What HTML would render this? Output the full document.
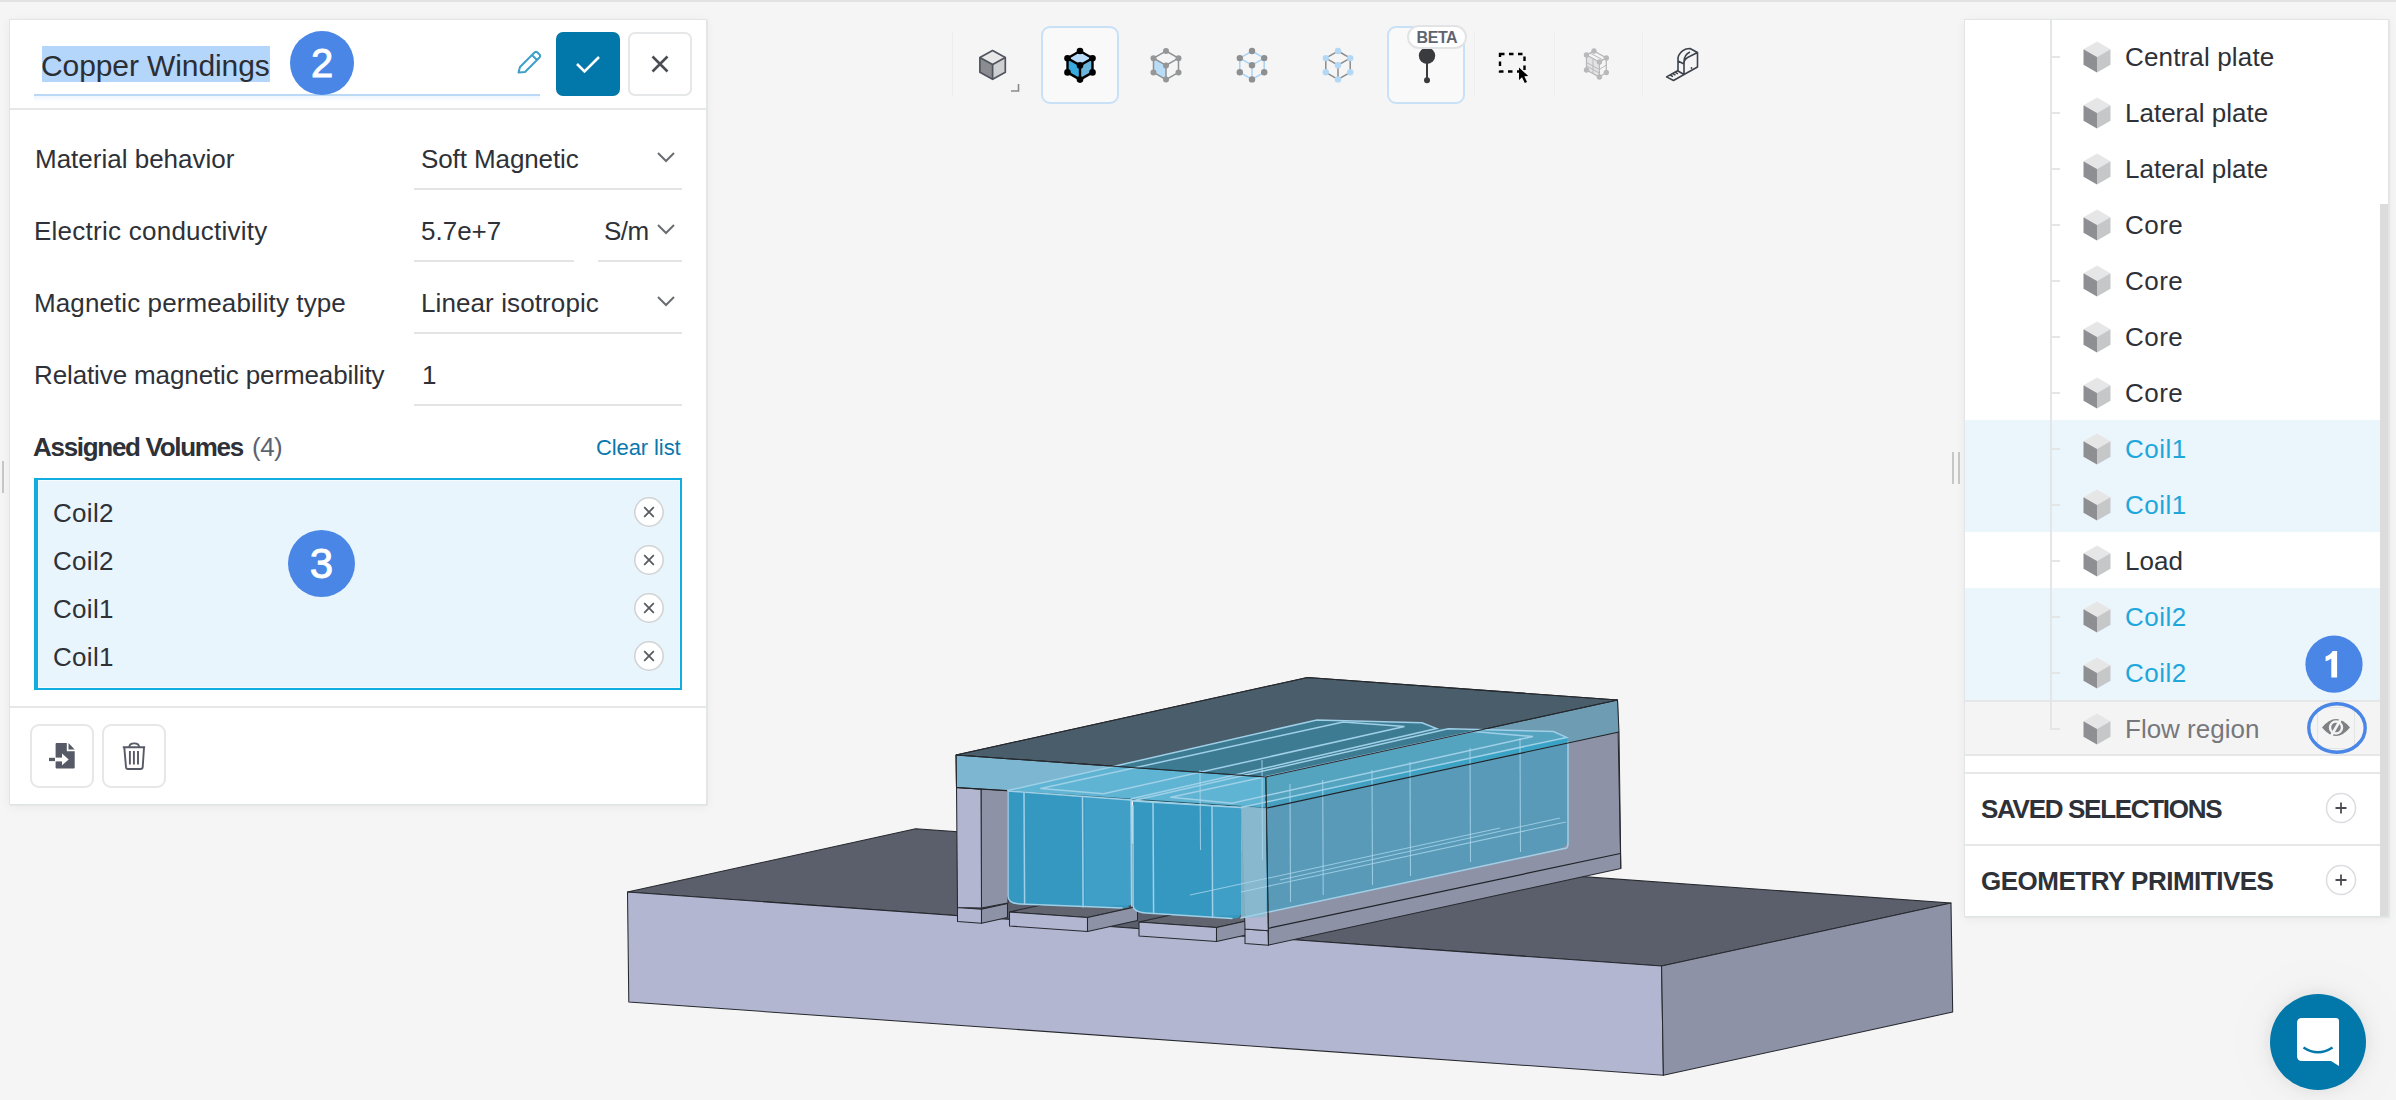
<!DOCTYPE html>
<html><head><meta charset="utf-8">
<style>
html,body{margin:0;padding:0}
body{width:2396px;height:1100px;overflow:hidden;background:#f5f5f5;position:relative;font-family:"Liberation Sans",sans-serif;color:#2e3137}
.a{position:absolute}
.t{position:absolute;line-height:26px;font-size:26px;white-space:nowrap}
.topline{left:0;top:0;width:2396px;height:2px;background:#e2e2e2}
#lp{left:9px;top:19px;width:696px;height:784px;background:#fff;border:1px solid #e2e5e5;box-shadow:1px 1px 0 #e4e7e7,0 2px 10px rgba(0,0,0,0.05)}
#rp{left:1964px;top:19px;width:423px;height:896px;background:#fff;border:1px solid #e2e5e5;box-shadow:1px 1px 0 #e4e7e7,0 2px 10px rgba(0,0,0,0.05)}
.hr{position:absolute;height:2px;background:#e6e8e8}
.ul{position:absolute;height:2px;background:#e3e4e6}
.badge{position:absolute;border-radius:50%;background:#4a86e6;color:#fff;font-weight:400;text-align:center;-webkit-text-stroke:0.9px #fff}
</style></head>
<body>
<div class="a topline"></div>

<!-- 3D model -->
<svg class="a" id="model" style="left:0;top:0" width="2396" height="1100" viewBox="0 0 2396 1100">
<polygon points="627.5,892.0 915.7,828.8 1951.0,903.0 1661.6,966.1" fill="#5b5e6b" stroke="#26292e" stroke-width="1.05" stroke-linejoin="round"/>
<polygon points="627.5,892.0 1661.6,966.1 1663.4,1075.2 628.8,1002.0" fill="#b3b6d1" stroke="#26292e" stroke-width="1.05" stroke-linejoin="round"/>
<polygon points="1661.6,966.1 1951.0,903.0 1952.7,1012.0 1663.4,1075.2" fill="#8e92a6" stroke="#26292e" stroke-width="1.05" stroke-linejoin="round"/>
<polygon points="1009.5,912.0 1087.5,917.5 1137.5,906.5 1059.5,901.0" fill="#62656f" stroke="#26292e" stroke-width="1.05" stroke-linejoin="round"/>
<polygon points="1009.5,912.0 1087.5,917.5 1087.5,931.5 1009.5,926.0" fill="#b3b6d1" stroke="#26292e" stroke-width="1.05" stroke-linejoin="round"/>
<polygon points="1087.5,917.5 1137.5,906.5 1137.5,920.5 1087.5,931.5" fill="#8e92a6" stroke="#26292e" stroke-width="1.05" stroke-linejoin="round"/>
<polygon points="1139.0,922.0 1216.5,927.5 1266.5,916.5 1189.0,911.0" fill="#62656f" stroke="#26292e" stroke-width="1.05" stroke-linejoin="round"/>
<polygon points="1139.0,922.0 1216.5,927.5 1216.5,941.5 1139.0,936.0" fill="#b3b6d1" stroke="#26292e" stroke-width="1.05" stroke-linejoin="round"/>
<polygon points="1216.5,927.5 1266.5,916.5 1266.5,930.5 1216.5,941.5" fill="#8e92a6" stroke="#26292e" stroke-width="1.05" stroke-linejoin="round"/>
<polygon points="957.5,907.5 981.5,909.2 1007.5,903.5 983.5,901.8" fill="#62656f" stroke="#26292e" stroke-width="1.05" stroke-linejoin="round"/>
<polygon points="957.5,907.5 981.5,909.2 981.5,923.2 957.5,921.5" fill="#b3b6d1" stroke="#26292e" stroke-width="1.05" stroke-linejoin="round"/>
<polygon points="981.5,909.2 1007.5,903.5 1007.5,917.5 981.5,923.2" fill="#8e92a6" stroke="#26292e" stroke-width="1.05" stroke-linejoin="round"/>
<polygon points="1245.0,929.0 1268.5,930.7 1268.5,930.7 1245.0,929.0" fill="#62656f" stroke="#26292e" stroke-width="1.05" stroke-linejoin="round"/>
<polygon points="1245.0,929.0 1268.5,930.7 1268.5,945.2 1245.0,943.5" fill="#b3b6d1" stroke="#26292e" stroke-width="1.05" stroke-linejoin="round"/>
<polygon points="1268.5,930.7 1268.5,930.7 1268.5,945.2 1268.5,945.2" fill="#8e92a6" stroke="#26292e" stroke-width="1.05" stroke-linejoin="round"/>
<polygon points="1265.5,777.0 1617.5,700.0 1620.8,868.5 1268.5,945.0" fill="#8e92a6" stroke="#26292e" stroke-width="1.05" stroke-linejoin="round"/>
<line x1="1267.5" y1="928.5" x2="1620.3" y2="853.5" stroke="#1f2226" stroke-width="1.2"/>
<polygon points="1265.5,777.0 1617.5,700.0 1619.0,732.0 1266.0,808.0" fill="#6e9cb2"/>
<polygon points="981.0,788.5 1008.0,790.5 1008.0,903.0 981.5,908.0" fill="#8e92a6" stroke="#26292e" stroke-width="1.05" stroke-linejoin="round"/>
<polygon points="956.5,787.5 981.0,789.2 981.5,908.0 957.5,907.5" fill="#b3b6d1" stroke="#26292e" stroke-width="1.05" stroke-linejoin="round"/>
<polygon points="1241.0,806.0 1266.0,808.0 1268.5,930.7 1245.0,929.0" fill="#b3b6d1" stroke="#26292e" stroke-width="1.05" stroke-linejoin="round"/>
<polygon points="956.0,755.0 1307.5,677.5 1617.5,700.0 1265.5,777.0" fill="#4a5d6b" stroke="#26292e" stroke-width="1.05" stroke-linejoin="round"/>
<polygon points="956.0,755.0 1265.5,777.0 1266.0,808.0 956.5,787.5" fill="#7db6d0" stroke="#26292e" stroke-width="1.05" stroke-linejoin="round"/>
<polygon points="1007.8,790.6 1316.9,719.9 1422.0,722.8 1436.6,728.6 1448.3,728.7 1553.5,731.6 1566.6,737.4 1568.0,742.0 1241.0,808.0 1131.0,800.0 1008.0,791.0" fill="rgb(40,175,215)" fill-opacity="0.37"/>
<polygon points="1241.0,808.0 1566.6,737.4 1568.0,742.0 1568.0,843.0 1562.0,848.0 1241.0,918.0" fill="rgb(20,165,205)" fill-opacity="0.44"/>
<polygon points="1241.0,806.0 1266.0,808.0 1266.0,917.0 1241.0,918.0" fill="rgb(140,186,206)" fill-opacity="0.85"/>
<path d="M1008 791 L1131 800 L1131 902 Q1131 908 1122 908 L1020 904 Q1008 903.5 1008 895 Z" fill="#3598c0"/>
<path d="M1133 801 L1241 807.5 L1241 913 Q1241 919 1232 918.5 L1146 913 Q1133 912 1133 905 Z" fill="#3598c0"/>
<path d="M1085 797.5 L1131 800 L1131 905 L1085 906 Z" fill="#49a6cc" fill-opacity="0.55"/>
<path d="M1213 806 L1241 807.5 L1241 915 L1213 916 Z" fill="#49a6cc" fill-opacity="0.55"/>
<polyline points="1007.8,790.6 1316.9,719.9 1422.0,722.8 1436.6,728.6 1131.4,798.8" stroke="#9fd0e8" stroke-width="1.5" fill="none" stroke-linecap="round"/>
<polyline points="1040.8,788.5 1343.2,721.9 1404.5,726.6 1103.6,793.8 1040.8,788.5" stroke="#9fd0e8" stroke-width="1.5" fill="none" stroke-linecap="round"/>
<polyline points="1132.8,800.8 1448.3,728.7 1553.5,731.6 1566.6,737.4 1240.9,807.5" stroke="#9fd0e8" stroke-width="1.5" fill="none" stroke-linecap="round"/>
<polyline points="1170.8,797.3 1473.2,731.6 1533.0,736.5 1232.0,803.2 1170.8,797.3" stroke="#9fd0e8" stroke-width="1.5" fill="none" stroke-linecap="round"/>
<path d="M1008 791 L1131 800 M1133 801 L1241 807.5" stroke="#9fd0e8" stroke-width="1.5" fill="none" stroke-linecap="round"/>
<path d="M1008 792 L1008 896 Q1008 903.5 1020 904 L1122 908 M1133 806 L1133 905 Q1133 912 1146 913 L1232 918.5 M1241 918 L1566.6 848 Q1568 847 1568 843 L1568 742" stroke="#9fd0e8" stroke-width="1.5" fill="none" stroke-linecap="round"/>
<line x1="1024" y1="793" x2="1024.6" y2="903.5" stroke="#9fd0e8" stroke-width="1.5" fill="none" stroke-linecap="round"/>
<line x1="1082.5" y1="797" x2="1083.1" y2="907" stroke="#9fd0e8" stroke-width="1.5" fill="none" stroke-linecap="round"/>
<line x1="1131" y1="800" x2="1131.6" y2="906" stroke="#9fd0e8" stroke-width="1.5" fill="none" stroke-linecap="round"/>
<line x1="1153" y1="802.5" x2="1153.6" y2="913.5" stroke="#9fd0e8" stroke-width="1.5" fill="none" stroke-linecap="round"/>
<line x1="1212" y1="806" x2="1212.6" y2="917.5" stroke="#9fd0e8" stroke-width="1.5" fill="none" stroke-linecap="round"/>
<line x1="1322.7" y1="780" x2="1323.2" y2="895" stroke="#a9d6ec" stroke-width="1.1" fill="none" stroke-opacity="0.8"/>
<line x1="1410" y1="762" x2="1410.5" y2="876" stroke="#a9d6ec" stroke-width="1.1" fill="none" stroke-opacity="0.8"/>
<line x1="1470" y1="748" x2="1470.5" y2="862" stroke="#a9d6ec" stroke-width="1.1" fill="none" stroke-opacity="0.8"/>
<line x1="1520" y1="738" x2="1520.5" y2="852" stroke="#a9d6ec" stroke-width="1.1" fill="none" stroke-opacity="0.8"/>
<line x1="1290" y1="784" x2="1290.5" y2="902" stroke="#a9d6ec" stroke-width="1.1" fill="none" stroke-opacity="0.8"/>
<line x1="1200" y1="770" x2="1200.5" y2="850" stroke="#a9d6ec" stroke-width="1.1" fill="none" stroke-opacity="0.8"/>
<line x1="1262" y1="760" x2="1262.5" y2="860" stroke="#a9d6ec" stroke-width="1.1" fill="none" stroke-opacity="0.8"/>
<line x1="1372" y1="770" x2="1372.5" y2="885" stroke="#a9d6ec" stroke-width="1.1" fill="none" stroke-opacity="0.8"/>
<path d="M1241 892 L1566 822 M1190 895 L1500 828 M1280 880 L1560 818" stroke="#a9d6ec" stroke-width="1.1" fill="none" stroke-opacity="0.8"/>
<polyline points="956.0,755.0 1307.5,677.5 1617.5,700.0 1619.0,732.0 1620.8,868.5" fill="none" stroke="#26292e" stroke-width="1.05" stroke-linejoin="round"/>
<polyline points="956.0,755.0 1265.5,777.0 1617.5,700.0" fill="none" stroke="#26292e" stroke-width="1.05" stroke-linejoin="round"/>
<line x1="956" y1="755" x2="956.5" y2="787.5" stroke="#26292e" stroke-width="1.05" stroke-linejoin="round"/>
<line x1="1266" y1="777" x2="1268.5" y2="945" stroke="#26292e" stroke-width="1.05" stroke-linejoin="round"/>
<line x1="1267" y1="808" x2="1619" y2="732" stroke="#1f2226" stroke-width="1.1"/>
<line x1="956.5" y1="787.5" x2="1007" y2="790.5" stroke="#1f2226" stroke-width="1.1"/>
</svg>

<!-- toolbar -->
<div class="a" style="left:952px;top:32px;width:1px;height:65px;background:#ededed"></div>
<div class="a" style="left:1474px;top:32px;width:1px;height:65px;background:#ededed"></div>
<div class="a" style="left:1554px;top:32px;width:1px;height:65px;background:#ededed"></div>
<div class="a" style="left:1642px;top:32px;width:1px;height:65px;background:#ededed"></div>
<div class="a" style="left:1041px;top:26px;width:74px;height:74px;border:2px solid #c9e1f7;border-radius:9px;background:#f9f9f9"></div>
<div class="a" style="left:1387px;top:26px;width:74px;height:74px;border:2px solid #c9e1f7;border-radius:9px;background:#f9f9f9"></div>
<svg class="a" style="left:0;top:0" width="1720" height="110" viewBox="0 0 1720 110"><polygon points="992.6,50.5 1005.3,57.5 992.6,64.5 979.9,57.5" fill="#e8e8e8"/><polygon points="979.9,57.5 992.6,64.5 992.6,79.3 979.9,72.3" fill="#8b8c91"/><polygon points="1005.3,57.5 992.6,64.5 992.6,79.3 1005.3,72.3" fill="#cfd0d2"/><polygon points="992.6,50.5 1005.3,57.5 1005.3,72.3 992.6,79.3 979.9,72.3 979.9,57.5" fill="none" stroke="#50545f" stroke-width="1.7" stroke-linejoin="round"/><polyline points="979.9,57.5 992.6,64.5 1005.3,57.5" fill="none" stroke="#50545f" stroke-width="1.7"/><line x1="992.6" y1="64.5" x2="992.6" y2="79.3" stroke="#50545f" stroke-width="1.7"/><polyline points="1011,91 1018.5,91 1018.5,84" fill="none" stroke="#8a8a8a" stroke-width="1.6"/><polygon points="1080.0,51.0 1092.5,58.2 1080.0,65.4 1067.5,58.2" fill="#b7dbf8"/><polygon points="1067.5,58.2 1080.0,65.4 1080.0,79.6 1067.5,72.4" fill="#37abdf"/><polygon points="1092.5,58.2 1080.0,65.4 1080.0,79.6 1092.5,72.4" fill="#6ab5dc"/><polygon points="1080.0,51.0 1092.5,58.2 1092.5,72.4 1080.0,79.6 1067.5,72.4 1067.5,58.2" fill="none" stroke="#000" stroke-width="2.4" stroke-linejoin="round"/><polyline points="1067.5,58.2 1080.0,65.4 1092.5,58.2" fill="none" stroke="#000" stroke-width="2.4"/><line x1="1080" y1="65.4" x2="1080" y2="79.60000000000001" stroke="#000" stroke-width="2.4"/><circle cx="1080" cy="51" r="3.3" fill="#000"/><circle cx="1067.5" cy="58.2" r="3.3" fill="#000"/><circle cx="1092.5" cy="58.2" r="3.3" fill="#000"/><circle cx="1080" cy="65.4" r="3.3" fill="#000"/><circle cx="1067.5" cy="72.4" r="3.3" fill="#000"/><circle cx="1092.5" cy="72.4" r="3.3" fill="#000"/><circle cx="1080" cy="79.60000000000001" r="3.3" fill="#000"/><polygon points="1153.5,58.2 1166.0,65.4 1166.0,79.6 1153.5,72.4" fill="#b9dcf7"/><polygon points="1166.0,51.0 1178.5,58.2 1178.5,72.4 1166.0,79.6 1153.5,72.4 1153.5,58.2" fill="none" stroke="#8f9092" stroke-width="1.5"/><polyline points="1153.5,58.2 1166.0,65.4 1178.5,58.2" fill="none" stroke="#8f9092" stroke-width="1.5"/><line x1="1166" y1="65.4" x2="1166" y2="79.60000000000001" stroke="#8f9092" stroke-width="1.5"/><circle cx="1166" cy="51" r="3" fill="#959698"/><circle cx="1153.5" cy="58.2" r="3" fill="#959698"/><circle cx="1178.5" cy="58.2" r="3" fill="#959698"/><circle cx="1166" cy="65.4" r="3" fill="#959698"/><circle cx="1153.5" cy="72.4" r="3" fill="#959698"/><circle cx="1178.5" cy="72.4" r="3" fill="#959698"/><circle cx="1166" cy="79.60000000000001" r="3" fill="#959698"/><polygon points="1252.0,51.0 1264.2,58.1 1264.2,72.3 1252.0,79.4 1239.8,72.3 1239.8,58.1" fill="none" stroke="#a9d2f5" stroke-width="1.5"/><polyline points="1239.8,58.1 1252.0,65.2 1264.2,58.1" fill="none" stroke="#a9d2f5" stroke-width="1.5"/><line x1="1252" y1="65.2" x2="1252" y2="79.4" stroke="#a9d2f5" stroke-width="1.5"/><circle cx="1252" cy="51" r="3.2" fill="#8e8f91"/><circle cx="1239.8" cy="58.1" r="3.2" fill="#8e8f91"/><circle cx="1264.2" cy="58.1" r="3.2" fill="#8e8f91"/><circle cx="1252" cy="65.2" r="3.2" fill="#8e8f91"/><circle cx="1239.8" cy="72.3" r="3.2" fill="#8e8f91"/><circle cx="1264.2" cy="72.3" r="3.2" fill="#8e8f91"/><circle cx="1252" cy="79.4" r="3.2" fill="#8e8f91"/><polygon points="1338.0,51.0 1350.2,58.1 1350.2,72.3 1338.0,79.4 1325.8,72.3 1325.8,58.1" fill="none" stroke="#8a8b8d" stroke-width="1.5"/><polyline points="1325.8,58.1 1338.0,65.2 1350.2,58.1" fill="none" stroke="#8a8b8d" stroke-width="1.5"/><line x1="1338" y1="65.2" x2="1338" y2="79.4" stroke="#8a8b8d" stroke-width="1.5"/><circle cx="1338" cy="51" r="3.2" fill="#b3d8f6"/><circle cx="1325.8" cy="58.1" r="3.2" fill="#b3d8f6"/><circle cx="1350.2" cy="58.1" r="3.2" fill="#b3d8f6"/><circle cx="1338" cy="65.2" r="3.2" fill="#b3d8f6"/><circle cx="1325.8" cy="72.3" r="3.2" fill="#b3d8f6"/><circle cx="1350.2" cy="72.3" r="3.2" fill="#b3d8f6"/><circle cx="1338" cy="79.4" r="3.2" fill="#b3d8f6"/><line x1="1427" y1="58" x2="1427" y2="80" stroke="#3a3b3f" stroke-width="2"/><circle cx="1427" cy="55.8" r="8.2" fill="#3a3b3f"/><circle cx="1427" cy="80.3" r="3" fill="#3a3b3f"/><rect x="1408" y="26" width="58" height="22" rx="11" fill="#fff" stroke="#e2e3e4" stroke-width="2"/><text x="1416.5" y="43" font-family="Liberation Sans" font-weight="700" font-size="16" fill="#5f6570" letter-spacing="-0.4">BETA</text><path d="M1500 54 L1524.5 54 L1524.5 71.5 L1500 71.5 Z" fill="none" stroke="#000" stroke-width="2.4" stroke-dasharray="4.5 4.5" stroke-dashoffset="0"/><path d="M1519 67.5 L1519 80 L1522 77.2 L1524.8 83 L1527 82 L1524.3 76.3 L1528.2 76 Z" fill="#000"/><polygon points="1586.5,55.0 1599.4,62.0 1599.4,77.0 1586.5,70.0" fill="#e3e3e5"/><polygon points="1594.0,51.0 1606.3,58.0 1606.3,72.5 1599.4,77.0 1586.5,70.0 1586.5,55.0" fill="none" stroke="#b9b9bb" stroke-width="1.3"/><polyline points="1586.5,55.0 1599.4,62.0 1606.3,58.0" fill="none" stroke="#b9b9bb" stroke-width="1.3"/><line x1="1599.4" y1="62" x2="1599.4" y2="77" stroke="#b9b9bb" stroke-width="1.3"/><path d="M1593 58.5 L1593 73.5 M1586.5 62.5 L1599.4 69.5 L1606.3 65 M1590 53 L1603 60 M1586.5 66 L1599.4 73" fill="none" stroke="#b9b9bb" stroke-width="1"/><circle cx="1594" cy="51" r="2.7" fill="#b9b9bb"/><circle cx="1586.5" cy="55" r="2.7" fill="#b9b9bb"/><circle cx="1606.3" cy="58" r="2.7" fill="#b9b9bb"/><circle cx="1599.4" cy="62" r="2.7" fill="#b9b9bb"/><circle cx="1586.5" cy="70" r="2.7" fill="#b9b9bb"/><circle cx="1606.3" cy="72.5" r="2.7" fill="#b9b9bb"/><circle cx="1599.4" cy="77" r="2.7" fill="#b9b9bb"/><path d="M1678 67 L1678 58 Q1679 52 1686 49 L1690 48.5 L1697.5 52.5 L1697.5 67 L1684 74.5 L1684 61.5 Q1684 55 1690 52 M1678 61 L1684 64 M1697.5 52.5 L1690 56.3 Q1684 59 1684 63 M1684 74.5 L1678 71 L1678 67" fill="none" stroke="#3d424c" stroke-width="1.6" stroke-linejoin="round"/><path d="M1678 70.5 L1666.5 76.8 L1673.5 80.5 L1684 74.5 M1670 75 L1673 76.6 M1672.5 73.6 L1675.5 75.2 M1675 72.2 L1678 73.8" fill="none" stroke="#3d424c" stroke-width="1.5" stroke-linejoin="round"/><circle cx="1691.5" cy="68" r="0.9" fill="#3d424c"/></svg>
<!-- Left panel -->
<div class="a" id="lp"></div>
<div class="hr" style="left:10px;top:108px;width:696px"></div>
<div class="hr" style="left:10px;top:706px;width:696px"></div>

<!-- title -->
<div class="a" style="left:42px;top:46px;width:228px;height:36px;background:#b5d6fb"></div>
<div class="t" style="left:41px;top:51px;font-size:30px;line-height:30px;letter-spacing:-0.1px;color:#2b2e33">Copper Windings</div>
<div class="a" style="left:34px;top:94px;width:506px;height:2px;background:#b9d9f7"></div>
<div class="a" style="left:34px;top:96px;width:506px;height:6px;background:linear-gradient(#eef6fd,#fff)"></div>
<div class="badge" style="left:290px;top:31px;width:64px;height:64px;font-size:40px;line-height:64px">2</div>
<svg class="a" style="left:514px;top:50px" width="28" height="28" viewBox="0 0 28 28"><path d="M4.5 22.5 L6 17 L20.5 2.5 Q22 1.2 23.5 2.5 L25.5 4.5 Q26.8 6 25.5 7.5 L11 22 Z M18 5 L23 10" fill="none" stroke="#3f9fc8" stroke-width="2" stroke-linejoin="round"/></svg>
<div class="a" style="left:556px;top:32px;width:64px;height:64px;background:#0277a9;border-radius:7px"></div>
<svg class="a" style="left:556px;top:32px" width="64" height="64" viewBox="0 0 64 64"><path d="M21 32 L28.5 39.5 L43 25" fill="none" stroke="#fff" stroke-width="2.6"/></svg>
<div class="a" style="left:628px;top:32px;width:60px;height:60px;border:2px solid #e6e7e8;border-radius:7px;background:#fff"></div>
<svg class="a" style="left:628px;top:32px" width="64" height="64" viewBox="0 0 64 64"><path d="M24.5 24.5 L39.5 39.5 M39.5 24.5 L24.5 39.5" fill="none" stroke="#4a4d52" stroke-width="2.6"/></svg>

<!-- form rows -->
<div class="t" style="left:35px;top:146px">Material behavior</div>
<div class="t" style="left:34px;top:218px;letter-spacing:0.25px">Electric conductivity</div>
<div class="t" style="left:34px;top:290px;letter-spacing:0.1px">Magnetic permeability type</div>
<div class="t" style="left:34px;top:362px;letter-spacing:-0.12px">Relative magnetic permeability</div>

<div class="t" style="left:421px;top:146px;letter-spacing:-0.1px">Soft Magnetic</div>
<div class="t" style="left:421px;top:218px;letter-spacing:0px">5.7e+7</div>
<div class="t" style="left:604px;top:218px;letter-spacing:-0.5px">S/m</div>
<div class="t" style="left:421px;top:290px;letter-spacing:0.1px">Linear isotropic</div>
<div class="t" style="left:422px;top:362px">1</div>
<svg class="a" style="left:656px;top:150px" width="20" height="14" viewBox="0 0 20 14"><path d="M2 3 L10 11 L18 3" fill="none" stroke="#6a6d72" stroke-width="2"/></svg>
<svg class="a" style="left:656px;top:222px" width="20" height="14" viewBox="0 0 20 14"><path d="M2 3 L10 11 L18 3" fill="none" stroke="#6a6d72" stroke-width="2"/></svg>
<svg class="a" style="left:656px;top:294px" width="20" height="14" viewBox="0 0 20 14"><path d="M2 3 L10 11 L18 3" fill="none" stroke="#6a6d72" stroke-width="2"/></svg>
<div class="ul" style="left:414px;top:188px;width:268px"></div>
<div class="ul" style="left:414px;top:260px;width:160px"></div>
<div class="ul" style="left:598px;top:260px;width:84px"></div>
<div class="ul" style="left:414px;top:332px;width:268px"></div>
<div class="ul" style="left:414px;top:404px;width:268px"></div>

<!-- assigned volumes -->
<div class="t" style="left:33px;top:434px;font-weight:700;letter-spacing:-1.3px">Assigned Volumes</div>
<div class="t" style="left:252px;top:434px;color:#5b6270;letter-spacing:-0.5px">(4)</div>
<div class="t" style="left:596px;top:437px;font-size:22px;line-height:22px;color:#0a78ad;letter-spacing:-0.1px">Clear list</div>
<div class="a" style="left:34px;top:478px;width:642px;height:208px;border:2px solid #12ade0;border-left-width:4px;background:#e8f5fc;box-shadow:inset 0 0 0 1px #f6fbfe"></div>
<div class="t" style="left:53px;top:500px;letter-spacing:0.3px">Coil2</div>
<div class="t" style="left:53px;top:548px;letter-spacing:0.3px">Coil2</div>
<div class="t" style="left:53px;top:596px;letter-spacing:0.3px">Coil1</div>
<div class="t" style="left:53px;top:644px;letter-spacing:0.3px">Coil1</div>
<div class="badge" style="left:288px;top:530px;width:67px;height:67px;font-size:42px;line-height:67px">3</div>
<svg class="a" style="left:633px;top:496px" width="32" height="32" viewBox="0 0 32 32"><circle cx="16" cy="16" r="14.2" fill="#fff" stroke="#d2d3d4" stroke-width="1.6"/><path d="M11.2 11.2 L20.8 20.8 M20.8 11.2 L11.2 20.8" stroke="#55585d" stroke-width="1.7"/></svg>
<svg class="a" style="left:633px;top:544px" width="32" height="32" viewBox="0 0 32 32"><circle cx="16" cy="16" r="14.2" fill="#fff" stroke="#d2d3d4" stroke-width="1.6"/><path d="M11.2 11.2 L20.8 20.8 M20.8 11.2 L11.2 20.8" stroke="#55585d" stroke-width="1.7"/></svg>
<svg class="a" style="left:633px;top:592px" width="32" height="32" viewBox="0 0 32 32"><circle cx="16" cy="16" r="14.2" fill="#fff" stroke="#d2d3d4" stroke-width="1.6"/><path d="M11.2 11.2 L20.8 20.8 M20.8 11.2 L11.2 20.8" stroke="#55585d" stroke-width="1.7"/></svg>
<svg class="a" style="left:633px;top:640px" width="32" height="32" viewBox="0 0 32 32"><circle cx="16" cy="16" r="14.2" fill="#fff" stroke="#d2d3d4" stroke-width="1.6"/><path d="M11.2 11.2 L20.8 20.8 M20.8 11.2 L11.2 20.8" stroke="#55585d" stroke-width="1.7"/></svg>

<!-- bottom buttons -->
<div class="a" style="left:30px;top:724px;width:60px;height:60px;border:2px solid #e6e7e8;border-radius:9px;background:#fff"></div>
<div class="a" style="left:102px;top:724px;width:60px;height:60px;border:2px solid #e6e7e8;border-radius:9px;background:#fff"></div>
<svg class="a" style="left:30px;top:724px" width="64" height="64" viewBox="0 0 64 64"><path d="M26.6 19.1 L36.8 19.1 L36.8 27.2 L44.7 27.2 L44.7 43.6 Q44.7 44.6 43.7 44.6 L26.6 44.6 Q25.6 44.6 25.6 43.6 L25.6 20.1 Q25.6 19.1 26.6 19.1 Z" fill="#565a66"/><path d="M38.5 19 L44.7 25.5 L38.5 25.5 Z" fill="#565a66"/><rect x="19" y="33.8" width="6" height="3.3" fill="#565a66"/><rect x="25" y="33.6" width="7.5" height="3.8" fill="#fff"/><path d="M32 29.6 L38.7 35.5 L32 41.3 Z" fill="#fff"/></svg>
<svg class="a" style="left:102px;top:724px" width="64" height="64" viewBox="0 0 64 64"><path d="M20.8 23.3 L43.1 23.3 M27.3 23 Q27.5 19.4 32.2 19.4 Q36.9 19.4 37.1 23 M22.3 23.5 L24 43.2 Q24.2 45 26 45 L38.7 45 Q40.5 45 40.7 43.2 L42 23.5 M27.9 27 L27.9 40.5 M31.9 27 L31.9 40.5 M36 27 L36 40.5" fill="none" stroke="#565a66" stroke-width="1.9"/></svg>


<!-- Right panel -->
<div class="a" id="rp"></div>
<div class="a" style="left:1965px;top:420px;width:415px;height:112px;background:#eaf5fc"></div>
<div class="a" style="left:1965px;top:588px;width:415px;height:112px;background:#eaf5fc"></div>
<div class="a" style="left:1965px;top:700px;width:415px;height:56px;background:#f4f4f4;border-top:2px solid #e6e7e8;border-bottom:2px solid #e6e7e8;box-sizing:border-box"></div>
<div class="a" style="left:2050px;top:20px;width:2px;height:710px;background:#e4e5e6"></div>
<div class="a" style="left:2052px;top:56px;width:8px;height:2px;background:#e4e5e6"></div>
<svg class="a" style="left:2083px;top:41px" width="28" height="32" viewBox="0 0 28 32"><path d="M14 0.5 L27.5 8.2 L14 16 L0.5 8.2 Z" fill="#e6e6e6"/><path d="M0.5 8.2 L14 16 L14 31.5 L0.5 23.8 Z" fill="#8e8f93"/><path d="M27.5 8.2 L14 16 L14 31.5 L27.5 23.8 Z" fill="#c6c7c9"/></svg>
<div class="t" style="left:2125px;top:44px;color:#2e3137;letter-spacing:0.15px">Central plate</div>
<div class="a" style="left:2052px;top:112px;width:8px;height:2px;background:#e4e5e6"></div>
<svg class="a" style="left:2083px;top:97px" width="28" height="32" viewBox="0 0 28 32"><path d="M14 0.5 L27.5 8.2 L14 16 L0.5 8.2 Z" fill="#e6e6e6"/><path d="M0.5 8.2 L14 16 L14 31.5 L0.5 23.8 Z" fill="#8e8f93"/><path d="M27.5 8.2 L14 16 L14 31.5 L27.5 23.8 Z" fill="#c6c7c9"/></svg>
<div class="t" style="left:2125px;top:100px;color:#2e3137">Lateral plate</div>
<div class="a" style="left:2052px;top:168px;width:8px;height:2px;background:#e4e5e6"></div>
<svg class="a" style="left:2083px;top:153px" width="28" height="32" viewBox="0 0 28 32"><path d="M14 0.5 L27.5 8.2 L14 16 L0.5 8.2 Z" fill="#e6e6e6"/><path d="M0.5 8.2 L14 16 L14 31.5 L0.5 23.8 Z" fill="#8e8f93"/><path d="M27.5 8.2 L14 16 L14 31.5 L27.5 23.8 Z" fill="#c6c7c9"/></svg>
<div class="t" style="left:2125px;top:156px;color:#2e3137">Lateral plate</div>
<div class="a" style="left:2052px;top:224px;width:8px;height:2px;background:#e4e5e6"></div>
<svg class="a" style="left:2083px;top:209px" width="28" height="32" viewBox="0 0 28 32"><path d="M14 0.5 L27.5 8.2 L14 16 L0.5 8.2 Z" fill="#e6e6e6"/><path d="M0.5 8.2 L14 16 L14 31.5 L0.5 23.8 Z" fill="#8e8f93"/><path d="M27.5 8.2 L14 16 L14 31.5 L27.5 23.8 Z" fill="#c6c7c9"/></svg>
<div class="t" style="left:2125px;top:212px;color:#2e3137;letter-spacing:0.45px">Core</div>
<div class="a" style="left:2052px;top:280px;width:8px;height:2px;background:#e4e5e6"></div>
<svg class="a" style="left:2083px;top:265px" width="28" height="32" viewBox="0 0 28 32"><path d="M14 0.5 L27.5 8.2 L14 16 L0.5 8.2 Z" fill="#e6e6e6"/><path d="M0.5 8.2 L14 16 L14 31.5 L0.5 23.8 Z" fill="#8e8f93"/><path d="M27.5 8.2 L14 16 L14 31.5 L27.5 23.8 Z" fill="#c6c7c9"/></svg>
<div class="t" style="left:2125px;top:268px;color:#2e3137;letter-spacing:0.45px">Core</div>
<div class="a" style="left:2052px;top:336px;width:8px;height:2px;background:#e4e5e6"></div>
<svg class="a" style="left:2083px;top:321px" width="28" height="32" viewBox="0 0 28 32"><path d="M14 0.5 L27.5 8.2 L14 16 L0.5 8.2 Z" fill="#e6e6e6"/><path d="M0.5 8.2 L14 16 L14 31.5 L0.5 23.8 Z" fill="#8e8f93"/><path d="M27.5 8.2 L14 16 L14 31.5 L27.5 23.8 Z" fill="#c6c7c9"/></svg>
<div class="t" style="left:2125px;top:324px;color:#2e3137;letter-spacing:0.45px">Core</div>
<div class="a" style="left:2052px;top:392px;width:8px;height:2px;background:#e4e5e6"></div>
<svg class="a" style="left:2083px;top:377px" width="28" height="32" viewBox="0 0 28 32"><path d="M14 0.5 L27.5 8.2 L14 16 L0.5 8.2 Z" fill="#e6e6e6"/><path d="M0.5 8.2 L14 16 L14 31.5 L0.5 23.8 Z" fill="#8e8f93"/><path d="M27.5 8.2 L14 16 L14 31.5 L27.5 23.8 Z" fill="#c6c7c9"/></svg>
<div class="t" style="left:2125px;top:380px;color:#2e3137;letter-spacing:0.45px">Core</div>
<div class="a" style="left:2052px;top:448px;width:8px;height:2px;background:#e4e5e6"></div>
<svg class="a" style="left:2083px;top:433px" width="28" height="32" viewBox="0 0 28 32"><path d="M14 0.5 L27.5 8.2 L14 16 L0.5 8.2 Z" fill="#e6e6e6"/><path d="M0.5 8.2 L14 16 L14 31.5 L0.5 23.8 Z" fill="#8e8f93"/><path d="M27.5 8.2 L14 16 L14 31.5 L27.5 23.8 Z" fill="#c6c7c9"/></svg>
<div class="t" style="left:2125px;top:436px;color:#1fa6da;letter-spacing:0.5px">Coil1</div>
<div class="a" style="left:2052px;top:504px;width:8px;height:2px;background:#e4e5e6"></div>
<svg class="a" style="left:2083px;top:489px" width="28" height="32" viewBox="0 0 28 32"><path d="M14 0.5 L27.5 8.2 L14 16 L0.5 8.2 Z" fill="#e6e6e6"/><path d="M0.5 8.2 L14 16 L14 31.5 L0.5 23.8 Z" fill="#8e8f93"/><path d="M27.5 8.2 L14 16 L14 31.5 L27.5 23.8 Z" fill="#c6c7c9"/></svg>
<div class="t" style="left:2125px;top:492px;color:#1fa6da;letter-spacing:0.5px">Coil1</div>
<div class="a" style="left:2052px;top:560px;width:8px;height:2px;background:#e4e5e6"></div>
<svg class="a" style="left:2083px;top:545px" width="28" height="32" viewBox="0 0 28 32"><path d="M14 0.5 L27.5 8.2 L14 16 L0.5 8.2 Z" fill="#e6e6e6"/><path d="M0.5 8.2 L14 16 L14 31.5 L0.5 23.8 Z" fill="#8e8f93"/><path d="M27.5 8.2 L14 16 L14 31.5 L27.5 23.8 Z" fill="#c6c7c9"/></svg>
<div class="t" style="left:2125px;top:548px;color:#2e3137">Load</div>
<div class="a" style="left:2052px;top:616px;width:8px;height:2px;background:#e4e5e6"></div>
<svg class="a" style="left:2083px;top:601px" width="28" height="32" viewBox="0 0 28 32"><path d="M14 0.5 L27.5 8.2 L14 16 L0.5 8.2 Z" fill="#e6e6e6"/><path d="M0.5 8.2 L14 16 L14 31.5 L0.5 23.8 Z" fill="#8e8f93"/><path d="M27.5 8.2 L14 16 L14 31.5 L27.5 23.8 Z" fill="#c6c7c9"/></svg>
<div class="t" style="left:2125px;top:604px;color:#1fa6da;letter-spacing:0.5px">Coil2</div>
<div class="a" style="left:2052px;top:672px;width:8px;height:2px;background:#e4e5e6"></div>
<svg class="a" style="left:2083px;top:657px" width="28" height="32" viewBox="0 0 28 32"><path d="M14 0.5 L27.5 8.2 L14 16 L0.5 8.2 Z" fill="#e6e6e6"/><path d="M0.5 8.2 L14 16 L14 31.5 L0.5 23.8 Z" fill="#8e8f93"/><path d="M27.5 8.2 L14 16 L14 31.5 L27.5 23.8 Z" fill="#c6c7c9"/></svg>
<div class="t" style="left:2125px;top:660px;color:#1fa6da;letter-spacing:0.5px">Coil2</div>
<div class="a" style="left:2052px;top:728px;width:8px;height:2px;background:#e4e5e6"></div>
<svg class="a" style="left:2083px;top:713px" width="28" height="32" viewBox="0 0 28 32"><path d="M14 0.5 L27.5 8.2 L14 16 L0.5 8.2 Z" fill="#e6e6e6"/><path d="M0.5 8.2 L14 16 L14 31.5 L0.5 23.8 Z" fill="#8e8f93"/><path d="M27.5 8.2 L14 16 L14 31.5 L27.5 23.8 Z" fill="#c6c7c9"/></svg>
<div class="t" style="left:2125px;top:716px;color:#76787c">Flow region</div>

<div class="a" style="left:2380px;top:204px;width:8px;height:712px;background:#dcdcdc"></div>
<div class="hr" style="left:1965px;top:772px;width:415px"></div>
<div class="hr" style="left:1965px;top:844px;width:415px"></div>
<div class="t" style="left:1981px;top:796px;font-weight:700;letter-spacing:-1.3px">SAVED SELECTIONS</div>
<div class="t" style="left:1981px;top:868px;font-weight:700;letter-spacing:-0.5px">GEOMETRY PRIMITIVES</div>
<svg class="a" style="left:2325px;top:792px" width="32" height="32" viewBox="0 0 32 32"><circle cx="16" cy="16" r="14.5" fill="#fff" stroke="#dcdde0" stroke-width="1.5"/><path d="M16 10.5 L16 21.5 M10.5 16 L21.5 16" stroke="#4a4d52" stroke-width="1.8"/></svg>
<svg class="a" style="left:2325px;top:864px" width="32" height="32" viewBox="0 0 32 32"><circle cx="16" cy="16" r="14.5" fill="#fff" stroke="#dcdde0" stroke-width="1.5"/><path d="M16 10.5 L16 21.5 M10.5 16 L21.5 16" stroke="#4a4d52" stroke-width="1.8"/></svg>
<svg class="a" style="left:2300px;top:630px" width="70" height="70" viewBox="2300 630 70 70"><circle cx="2334" cy="664.2" r="28.6" fill="#4a86e6"/><path d="M2331.3 677.5 L2331.3 658.6 Q2328.8 660.6 2325.6 661.3 L2325.6 656.4 Q2330.6 654.9 2332.6 651 L2337.1 651 L2337.1 677.5 Z" fill="#fff"/></svg>
<svg class="a" style="left:2300px;top:700px" width="72" height="58" viewBox="2300 700 72 58"><rect x="2317.5" y="707.5" width="37" height="41" fill="#f4f4f4" stroke="#e3e4e5" stroke-width="1"/><ellipse cx="2337" cy="728" rx="28.2" ry="24.2" fill="none" stroke="#4a86e6" stroke-width="3.4"/><path d="M2322 727.5 Q2336 710.5 2350 727.5 Q2336 744.5 2322 727.5 Z" fill="#7f8185"/><circle cx="2336" cy="727.5" r="6" fill="none" stroke="#f4f4f4" stroke-width="2.4"/><path d="M2341.5 718 L2330.5 737" stroke="#f4f4f4" stroke-width="2.6"/></svg>
<!-- handles -->
<div class="a" style="left:1952px;top:452px;width:2px;height:32px;background:#c6c6c6"></div>
<div class="a" style="left:1958px;top:452px;width:2px;height:32px;background:#c6c6c6"></div>
<div class="a" style="left:2px;top:461px;width:2px;height:32px;background:#c6c6c8"></div>
<!-- chat -->
<div class="a" style="left:2270px;top:994px;width:96px;height:96px;border-radius:50%;background:#0277a9;box-shadow:0 0 18px rgba(0,0,0,0.09),0 0 70px rgba(0,0,0,0.04)"></div>
<svg class="a" style="left:2270px;top:994px" width="96" height="96" viewBox="0 0 96 96"><path d="M32 24 L66 24 Q69 24 69 27 L69 72 L61 67 L32 67 Q27 67 27 62 L27 29 Q27 24 32 24 Z" fill="#fff"/><path d="M33.5 53.5 Q48 63 62.5 53.5" fill="none" stroke="#0277a9" stroke-width="2.4"/></svg>
</body></html>
